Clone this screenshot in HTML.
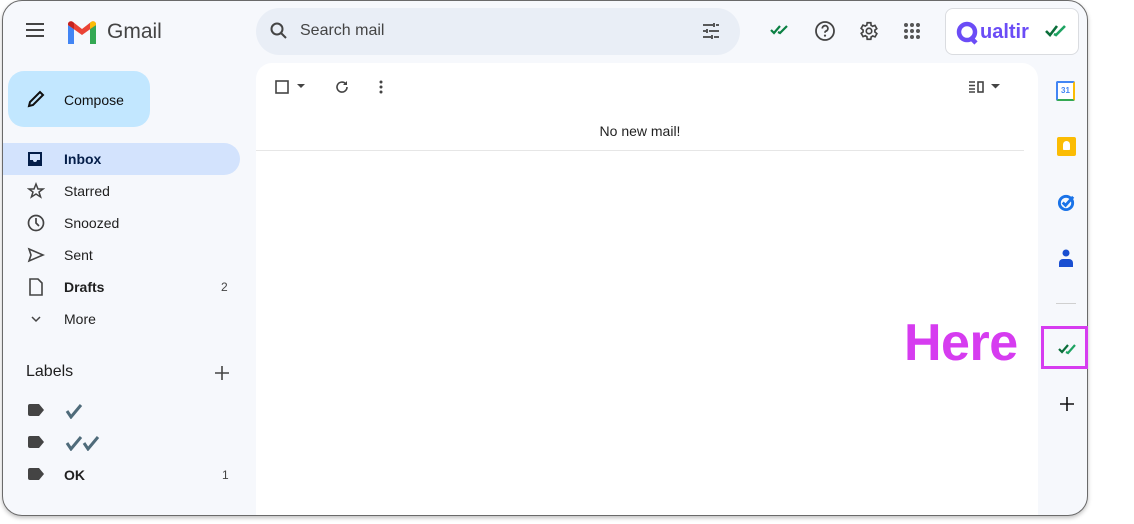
<!DOCTYPE html>
<html><head><meta charset="utf-8"><style>
*{margin:0;padding:0;box-sizing:border-box}
body{width:1134px;height:524px;background:#fff;font-family:"Liberation Sans",Arial,sans-serif;position:relative;overflow:hidden;color:#1f1f1f}
.win{position:absolute;left:2px;top:0px;width:1086px;height:516px;background:#f6f8fc;border:1.5px solid #6a6a6a;border-radius:20px;overflow:hidden;box-shadow:0 2px 4px rgba(0,0,0,.25)}
.abs{position:absolute}
.nav{position:absolute;left:0;height:32px;width:237px;display:flex;align-items:center;font-size:14px;color:#1f1f1f}
.nav svg{position:absolute;left:24px}
.nav span{position:absolute;left:61px}
.nav .c{position:absolute;left:218px;font-size:12px;color:#444}
</style></head><body>
<div class="win">
 <svg class="abs" style="left:22px;top:20px" width="20" height="18"><rect x="1" y="2" width="18" height="2" fill="#444"/><rect x="1" y="8" width="18" height="2" fill="#444"/><rect x="1" y="14" width="18" height="2" fill="#444"/></svg>
 <svg class="abs" style="left:63px;top:19px" width="32" height="24" viewBox="0 0 32 24"><path d="M2 24V5l6 4v15z" fill="#4285f4"/><path d="M24 24V9l6-4v19z" fill="#34a853"/><path d="M2 5l14 10 14-10v-1a3 3 0 0 0-5-2L16 9 7 2a3 3 0 0 0-5 2z" fill="#ea4335"/><path d="M24 9l6-4v-1a3 3 0 0 0-5-2l-1 1z" fill="#fbbc04"/><path d="M2 5V4a3 3 0 0 1 5-2l1 1v6z" fill="#c5221f"/></svg>
 <div class="abs" style="left:104px;top:19px;font-size:21px;color:#444">Gmail</div>
 <div class="abs" style="left:253px;top:7px;width:484px;height:47px;background:#e9eef6;border-radius:24px"></div>
 <svg class="abs" style="left:266px;top:20px" width="20" height="20" viewBox="0 0 20 20"><circle cx="8" cy="8" r="5.5" fill="none" stroke="#444" stroke-width="2"/><path d="M12 12l5 5" stroke="#444" stroke-width="2"/></svg>
 <div class="abs" style="left:297px;top:21px;font-size:16px;color:#444">Search mail</div>
 <svg class="abs" style="left:698px;top:20px" width="20" height="20" viewBox="0 0 20 20" stroke="#444" stroke-width="1.8"><path d="M2 4h10M15 4h3M13 2v4M2 10h3M8 10h10M6 8v4M2 16h8M13 16h5M11 14v4"/></svg>
 <svg class="abs" style="left:767px;top:23px" width="20" height="12" viewBox="0 0 20 12"><path d="M1 6l3 3 6-7M8 8l2 1 7-7" fill="none" stroke="#0b8043" stroke-width="2.2"/></svg>
 <svg class="abs" style="left:811px;top:19px" width="22" height="22" viewBox="0 0 22 22"><circle cx="11" cy="11" r="9" fill="none" stroke="#444" stroke-width="1.8"/><path d="M8.3 8.5a2.8 2.8 0 1 1 3.7 2.6c-.7.3-1 .8-1 1.6" fill="none" stroke="#444" stroke-width="1.8"/><circle cx="11" cy="15.6" r="1.1" fill="#444"/></svg>
 <svg class="abs" style="left:855px;top:19px" width="22" height="22" viewBox="0 0 24 24"><path d="M19.4 13a7.5 7.5 0 0 0 0-2l2.1-1.6-2-3.5-2.5 1a7 7 0 0 0-1.7-1L15 3h-4l-.4 2.6a7 7 0 0 0-1.7 1l-2.5-1-2 3.5L6.6 11a7.5 7.5 0 0 0 0 2l-2.1 1.6 2 3.5 2.5-1a7 7 0 0 0 1.7 1L11 21h4l.4-2.6a7 7 0 0 0 1.7-1l2.5 1 2-3.5z" fill="none" stroke="#444" stroke-width="1.8" transform="translate(-1 0)"/><circle cx="12" cy="12" r="3" fill="none" stroke="#444" stroke-width="1.8"/></svg>
 <svg class="abs" style="left:900px;top:21px" width="18" height="18" viewBox="0 0 18 18" fill="#555"><circle cx="3" cy="3" r="2"/><circle cx="9" cy="3" r="2"/><circle cx="15" cy="3" r="2"/><circle cx="3" cy="9" r="2"/><circle cx="9" cy="9" r="2"/><circle cx="15" cy="9" r="2"/><circle cx="3" cy="15" r="2"/><circle cx="9" cy="15" r="2"/><circle cx="15" cy="15" r="2"/></svg>
 <div class="abs" style="left:942px;top:7px;width:134px;height:47px;background:#fff;border:1px solid #dadce0;border-radius:8px"></div>
 <svg class="abs" style="left:953px;top:20px" width="26" height="26" viewBox="0 0 26 26"><circle cx="11" cy="11" r="8" fill="none" stroke="#6b4cf6" stroke-width="4.5"/><path d="M14 16l6 6" stroke="#6b4cf6" stroke-width="4.5"/></svg>
 <div class="abs" style="left:977px;top:20px;font-size:20px;font-weight:bold;color:#6b4cf6">ualtir</div>
 <svg class="abs" style="left:1042px;top:23px" width="24" height="14" viewBox="0 0 24 14"><path d="M1 7l4 4 7-9" fill="none" stroke="#0b6e3a" stroke-width="2.6"/><path d="M9 10l2 1 9-9" fill="none" stroke="#1ea362" stroke-width="2.6"/></svg>
 <div class="abs" style="left:5px;top:70px;width:142px;height:56px;background:#c2e7ff;border-radius:16px"></div>
 <svg class="abs" style="left:23px;top:88px" width="20" height="20" viewBox="0 0 20 20"><path d="M3 17l1-4L14 3l3 3L7 16z" fill="none" stroke="#111" stroke-width="2"/></svg>
 <div class="abs" style="left:61px;top:91px;font-size:14px;color:#111">Compose</div>
 <div class="nav" style="top:142px;background:#d3e3fd;border-radius:0 16px 16px 0;font-weight:bold;color:#041e49">
  <svg width="16" height="16" viewBox="0 0 16 16"><path d="M1 1h14v14H1z" fill="#041e49"/><path d="M3 3h10v6h-3a2 2 0 0 1-4 0H3z" fill="#d3e3fd"/></svg><span>Inbox</span></div>
 <div class="nav" style="top:174px"><svg width="18" height="18" viewBox="0 0 18 18"><path d="M9 2l2 5h5l-4 3 1.6 5L9 12l-4.6 3L6 10 2 7h5z" fill="none" stroke="#444" stroke-width="1.5"/></svg><span>Starred</span></div>
 <div class="nav" style="top:206px"><svg width="18" height="18" viewBox="0 0 18 18"><circle cx="9" cy="9" r="7.5" fill="none" stroke="#444" stroke-width="1.7"/><path d="M9 4v5l3 3" fill="none" stroke="#444" stroke-width="1.7"/></svg><span>Snoozed</span></div>
 <div class="nav" style="top:238px"><svg width="18" height="18" viewBox="0 0 18 18"><path d="M2 3l14 6-14 6 2-6z" fill="none" stroke="#444" stroke-width="1.6"/></svg><span>Sent</span></div>
 <div class="nav" style="top:270px;font-weight:bold"><svg width="18" height="18" viewBox="0 0 18 18"><path d="M3 1h8l4 4v12H3z" fill="none" stroke="#444" stroke-width="1.6"/></svg><span>Drafts</span><b class="c" style="font-weight:normal">2</b></div>
 <div class="nav" style="top:302px"><svg width="18" height="18" viewBox="0 0 18 18"><path d="M5 7l4 4 4-4" fill="none" stroke="#444" stroke-width="1.5"/></svg><span>More</span></div>
 <div class="abs" style="left:23px;top:362px;font-size:16px;color:#1f1f1f">Labels</div>
 <svg class="abs" style="left:211px;top:364px" width="16" height="16"><path d="M8 1v14M1 8h14" stroke="#444" stroke-width="1.6"/></svg>
 <svg class="abs" style="left:25px;top:403px" width="16" height="12"><path d="M2 0h9l5 6-5 6H2a2 2 0 0 1-2-2V2a2 2 0 0 1 2-2z" fill="#444"/></svg>
 <svg class="abs" style="left:25px;top:435px" width="16" height="12"><path d="M2 0h9l5 6-5 6H2a2 2 0 0 1-2-2V2a2 2 0 0 1 2-2z" fill="#444"/></svg>
 <svg class="abs" style="left:25px;top:467px" width="16" height="12"><path d="M2 0h9l5 6-5 6H2a2 2 0 0 1-2-2V2a2 2 0 0 1 2-2z" fill="#444"/></svg>
 <svg class="abs" style="left:62px;top:402px" width="18" height="16" viewBox="0 0 18 16"><path d="M2 8l4 6L16 2" fill="none" stroke="#4f6b7a" stroke-width="3"/></svg>
 <svg class="abs" style="left:62px;top:434px" width="36" height="16" viewBox="0 0 36 16"><path d="M2 8l4 6L16 2M19 8l4 6L33 2" fill="none" stroke="#4f6b7a" stroke-width="3"/></svg>
 <div class="abs" style="left:61px;top:466px;font-size:14px;font-weight:bold">OK</div>
 <div class="abs" style="left:219px;top:467px;font-size:12px;color:#444">1</div>
 <div class="abs" style="left:253px;top:62px;width:782px;height:460px;background:#fff;border-radius:16px 16px 0 0"></div>
 <svg class="abs" style="left:272px;top:79px" width="14" height="14"><rect x="1" y="1" width="12" height="12" fill="none" stroke="#444" stroke-width="1.6"/></svg>
 <svg class="abs" style="left:294px;top:83px" width="8" height="5"><path d="M0 0h8L4 4z" fill="#444"/></svg>
 <svg class="abs" style="left:331px;top:78px" width="16" height="16" viewBox="0 0 16 16"><path d="M13 8a5 5 0 1 1-1.5-3.5" fill="none" stroke="#444" stroke-width="1.6"/><path d="M13 2v4H9z" fill="#444"/></svg>
 <svg class="abs" style="left:376px;top:79px" width="4" height="14"><circle cx="2" cy="2" r="1.5" fill="#444"/><circle cx="2" cy="7" r="1.5" fill="#444"/><circle cx="2" cy="12" r="1.5" fill="#444"/></svg>
 <svg class="abs" style="left:966px;top:80px" width="16" height="12" viewBox="0 0 16 12"><path d="M0 1h6M0 4.5h6M0 8h6M0 11h6" stroke="#444" stroke-width="1.4"/><rect x="9" y="1" width="5" height="10" fill="none" stroke="#444" stroke-width="1.6"/></svg>
 <svg class="abs" style="left:988px;top:83px" width="9" height="5"><path d="M0 0h9L4.5 4.5z" fill="#444"/></svg>
 <div class="abs" style="left:253px;top:122px;width:768px;text-align:center;font-size:14px;color:#222">No new mail!</div>
 <div class="abs" style="left:253px;top:149px;width:768px;height:1px;background:#e6e6e6"></div>
 <div class="abs" style="left:1053px;top:80px;width:19px;height:20px;border-radius:2px;border:2px solid #4285f4;border-bottom-color:#34a853;border-right-color:#fbbc04;background-color:#fff;font-size:8px;font-weight:bold;color:#4285f4;text-align:center;line-height:16px">31</div>
 <div class="abs" style="left:1054px;top:136px;width:19px;height:19px;background:#fbbc04;border-radius:2px"><div style="margin:4px auto 0;width:7px;height:9px;background:#fff;border-radius:4px 4px 1px 1px"></div></div>
 <svg class="abs" style="left:1054px;top:192px" width="19" height="19" viewBox="0 0 20 20"><circle cx="9.5" cy="10.5" r="7" fill="none" stroke="#1a73e8" stroke-width="3"/><path d="M6 10l3 3 8-9" fill="none" stroke="#1a73e8" stroke-width="3"/></svg>
 <svg class="abs" style="left:1055px;top:248px" width="16" height="18" viewBox="0 0 16 18"><circle cx="8" cy="4" r="3.5" fill="#1a4fd1"/><path d="M1 18v-4a4 4 0 0 1 4-4h6a4 4 0 0 1 4 4v4z" fill="#1a4fd1"/></svg>
 <div class="abs" style="left:1053px;top:302px;width:20px;height:1px;background:#d0d0d0"></div>
 <svg class="abs" style="left:1055px;top:342px" width="20" height="12" viewBox="0 0 20 12"><path d="M1 6l3 3 6-7" fill="none" stroke="#0b6e3a" stroke-width="2.2"/><path d="M8 9l2 1 7-8" fill="none" stroke="#1ea362" stroke-width="2.2"/></svg>
 <svg class="abs" style="left:1056px;top:395px" width="16" height="16"><path d="M8 1v14M1 8h14" stroke="#111" stroke-width="1.6"/></svg>
</div>
<div class="abs" style="left:1041px;top:326px;width:47px;height:43px;border:3px solid #d63cf0"></div>
<div class="abs" style="left:904px;top:313px;font-size:52px;font-weight:bold;color:#d63cf0;letter-spacing:-0.5px">Here</div>
</body></html>
